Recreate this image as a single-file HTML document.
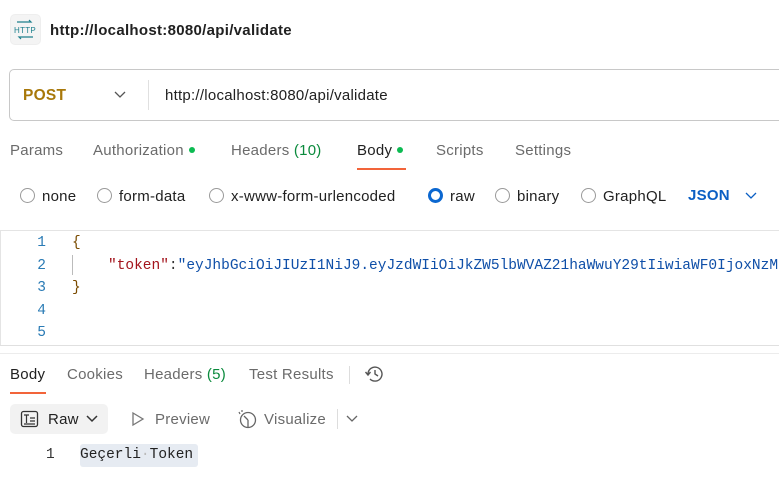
<!DOCTYPE html>
<html><head><style>
*{margin:0;padding:0;box-sizing:border-box}
body{width:779px;height:492px;overflow:hidden;background:#fff;font-family:"Liberation Sans",sans-serif;font-size:15px;letter-spacing:0.25px;color:#212121;position:relative}
.a{position:absolute;white-space:nowrap}
.g{color:#6b6b6b}
.dot{display:inline-block;width:6px;height:6px;border-radius:50%;background:#0cbb52;margin-left:5px;vertical-align:2px}
.radio{display:inline-block;width:15px;height:15px;border:1.3px solid #9a9a9a;border-radius:50%;vertical-align:-2px;margin-right:7px}
.mono{font-family:"Liberation Mono",monospace;font-size:14.5px;letter-spacing:0}
.ln{color:#2a7bb5;width:46px;text-align:right}
</style></head><body>
<div class="a" style="left:10px;top:14px;width:31px;height:31px;background:#f4f4f4;border-radius:5px;border:1px solid #eee"></div>
<svg class="a" style="left:14px;top:19px" width="22" height="22" viewBox="0 0 22 22"><path d="M3 3h14l-2-2M19 18H5l2 2" stroke="#1d7f8c" fill="none" stroke-width="1.2"/><text x="11" y="14" font-size="8" text-anchor="middle" fill="#1d7f8c" font-family="Liberation Sans">HTTP</text></svg>
<div class="a" style="left:50px;top:22px;font-weight:bold;font-size:15px;letter-spacing:0.3px">http://localhost:8080/api/validate</div>
<div class="a" style="left:9px;top:69px;width:790px;height:52px;border:1px solid #c8c8c8;border-radius:5px"></div>
<div class="a" style="left:23px;top:87px;font-weight:bold;color:#a8780a;font-size:15.5px">POST</div>
<svg class="a" style="left:114px;top:90px" width="12" height="10"><path d="M1 2l5 5 5-5" stroke="#555" fill="none" stroke-width="1.3"/></svg>
<div class="a" style="left:148px;top:80px;width:1px;height:30px;background:#e0e0e0"></div>
<div class="a" style="left:165px;top:87px;font-size:15px">http://localhost:8080/api/validate</div>
<div class="a g" style="left:10px;top:142px">Params</div>
<div class="a g" style="left:93px;top:142px">Authorization<span class="dot"></span></div>
<div class="a g" style="left:231px;top:142px">Headers <span style="color:#0a8a3c">(10)</span></div>
<div class="a" style="left:357px;top:142px">Body<span class="dot"></span></div>
<div class="a" style="left:357px;top:168px;width:49px;height:2px;background:#f2643a"></div>
<div class="a g" style="left:436px;top:142px">Scripts</div>
<div class="a g" style="left:515px;top:142px">Settings</div>
<div class="a" style="left:20px;top:188px"><span class="radio"></span>none</div>
<div class="a" style="left:97px;top:188px"><span class="radio"></span>form-data</div>
<div class="a" style="left:209px;top:188px"><span class="radio"></span>x-www-form-urlencoded</div>
<div class="a" style="left:428px;top:188px"><span class="radio" style="border:3.5px solid #0b67d0"></span>raw</div>
<div class="a" style="left:495px;top:188px"><span class="radio"></span>binary</div>
<div class="a" style="left:581px;top:188px"><span class="radio"></span>GraphQL</div>
<div class="a" style="left:688px;top:187px;color:#0b5fc4;font-weight:bold">JSON</div>
<svg class="a" style="left:745px;top:191px" width="12" height="10"><path d="M1 2l5 5 5-5" stroke="#0b5fc4" fill="none" stroke-width="1.3"/></svg>
<div class="a" style="left:0;top:230px;width:779px;height:1px;background:#e4e4e4"></div>
<div class="a" style="left:0;top:230px;width:1px;height:116px;background:#e4e4e4"></div>
<div class="a" style="left:0;top:345px;width:779px;height:1px;background:#e0e0e0"></div>
<div class="a mono" style="left:0;top:232px;line-height:22.5px">
<div class="ln">1</div><div class="ln">2</div><div class="ln">3</div><div class="ln">4</div><div class="ln">5</div></div>
<div class="a mono" style="left:72px;top:232px;line-height:22.5px;color:#7a4b00">
<div>{</div><div style="padding-left:36px"><span style="color:#a3141c">"token"</span><span style="color:#333">:</span><span style="color:#0f4fa8">"eyJhbGciOiJIUzI1NiJ9.eyJzdWIiOiJkZW5lbWVAZ21haWwuY29tIiwiaWF0IjoxNzM</span></div><div>}</div></div>
<div class="a" style="left:72px;top:255px;width:1px;height:20px;background:#bbb"></div>
<div class="a" style="left:0;top:353px;width:779px;height:1px;background:#ececec"></div>
<div class="a" style="left:10px;top:366px">Body</div>
<div class="a" style="left:10px;top:392px;width:36px;height:2px;background:#f2643a"></div>
<div class="a g" style="left:67px;top:366px">Cookies</div>
<div class="a g" style="left:144px;top:366px">Headers <span style="color:#0a8a3c">(5)</span></div>
<div class="a g" style="left:249px;top:366px">Test Results</div>
<div class="a" style="left:349px;top:366px;width:1px;height:18px;background:#ddd"></div>
<svg class="a" style="left:364px;top:364px" width="22" height="20" viewBox="0 0 22 20"><path d="M4 10a7 7 0 1 1 2 5" stroke="#555" fill="none" stroke-width="1.4"/><path d="M1.5 8l2.5 3 2.5-3" stroke="#555" fill="none" stroke-width="1.4"/><path d="M11 6v4l3 2" stroke="#555" fill="none" stroke-width="1.4"/></svg>
<div class="a" style="left:10px;top:404px;width:98px;height:30px;background:#f2f2f2;border-radius:5px"></div>
<svg class="a" style="left:20px;top:410px" width="20" height="18"><rect x="1.5" y="1.5" width="16" height="15" rx="2" stroke="#333" fill="none" stroke-width="1.3"/><path d="M4 5h5M6.5 5v8M10 8h5M10 11h5M4 14h11" stroke="#333" stroke-width="1.2"/></svg>
<div class="a" style="left:48px;top:411px">Raw</div>
<svg class="a" style="left:86px;top:414px" width="12" height="10"><path d="M1 2l5 5 5-5" stroke="#333" fill="none" stroke-width="1.5"/></svg>
<svg class="a" style="left:130px;top:411px" width="16" height="16"><path d="M3 2l10 6-10 6z" stroke="#777" fill="none" stroke-width="1.3"/></svg>
<div class="a g" style="left:155px;top:411px">Preview</div>
<svg class="a" style="left:236px;top:409px" width="22" height="20"><circle cx="12" cy="11" r="7.5" stroke="#666" fill="none" stroke-width="1.3"/><path d="M12 11l-4-4M12 11v7" stroke="#666" stroke-width="1.3"/><path d="M3 3l1 2M6 1v2" stroke="#666" stroke-width="1.2"/></svg>
<div class="a g" style="left:264px;top:411px">Visualize</div>
<div class="a" style="left:337px;top:409px;width:1px;height:20px;background:#ddd"></div>
<svg class="a" style="left:346px;top:414px" width="12" height="10"><path d="M1 2l5 5 5-5" stroke="#666" fill="none" stroke-width="1.3"/></svg>
<div class="a mono" style="left:46px;top:447px;color:#333">1</div>
<div class="a" style="left:80px;top:444px;height:23px;width:118px;background:#e6ebf2;border-radius:3px"></div>
<div class="a mono" style="left:80px;top:447px;color:#222">Geçerli<span style="color:#bbb">·</span>Token</div>
</body></html>
